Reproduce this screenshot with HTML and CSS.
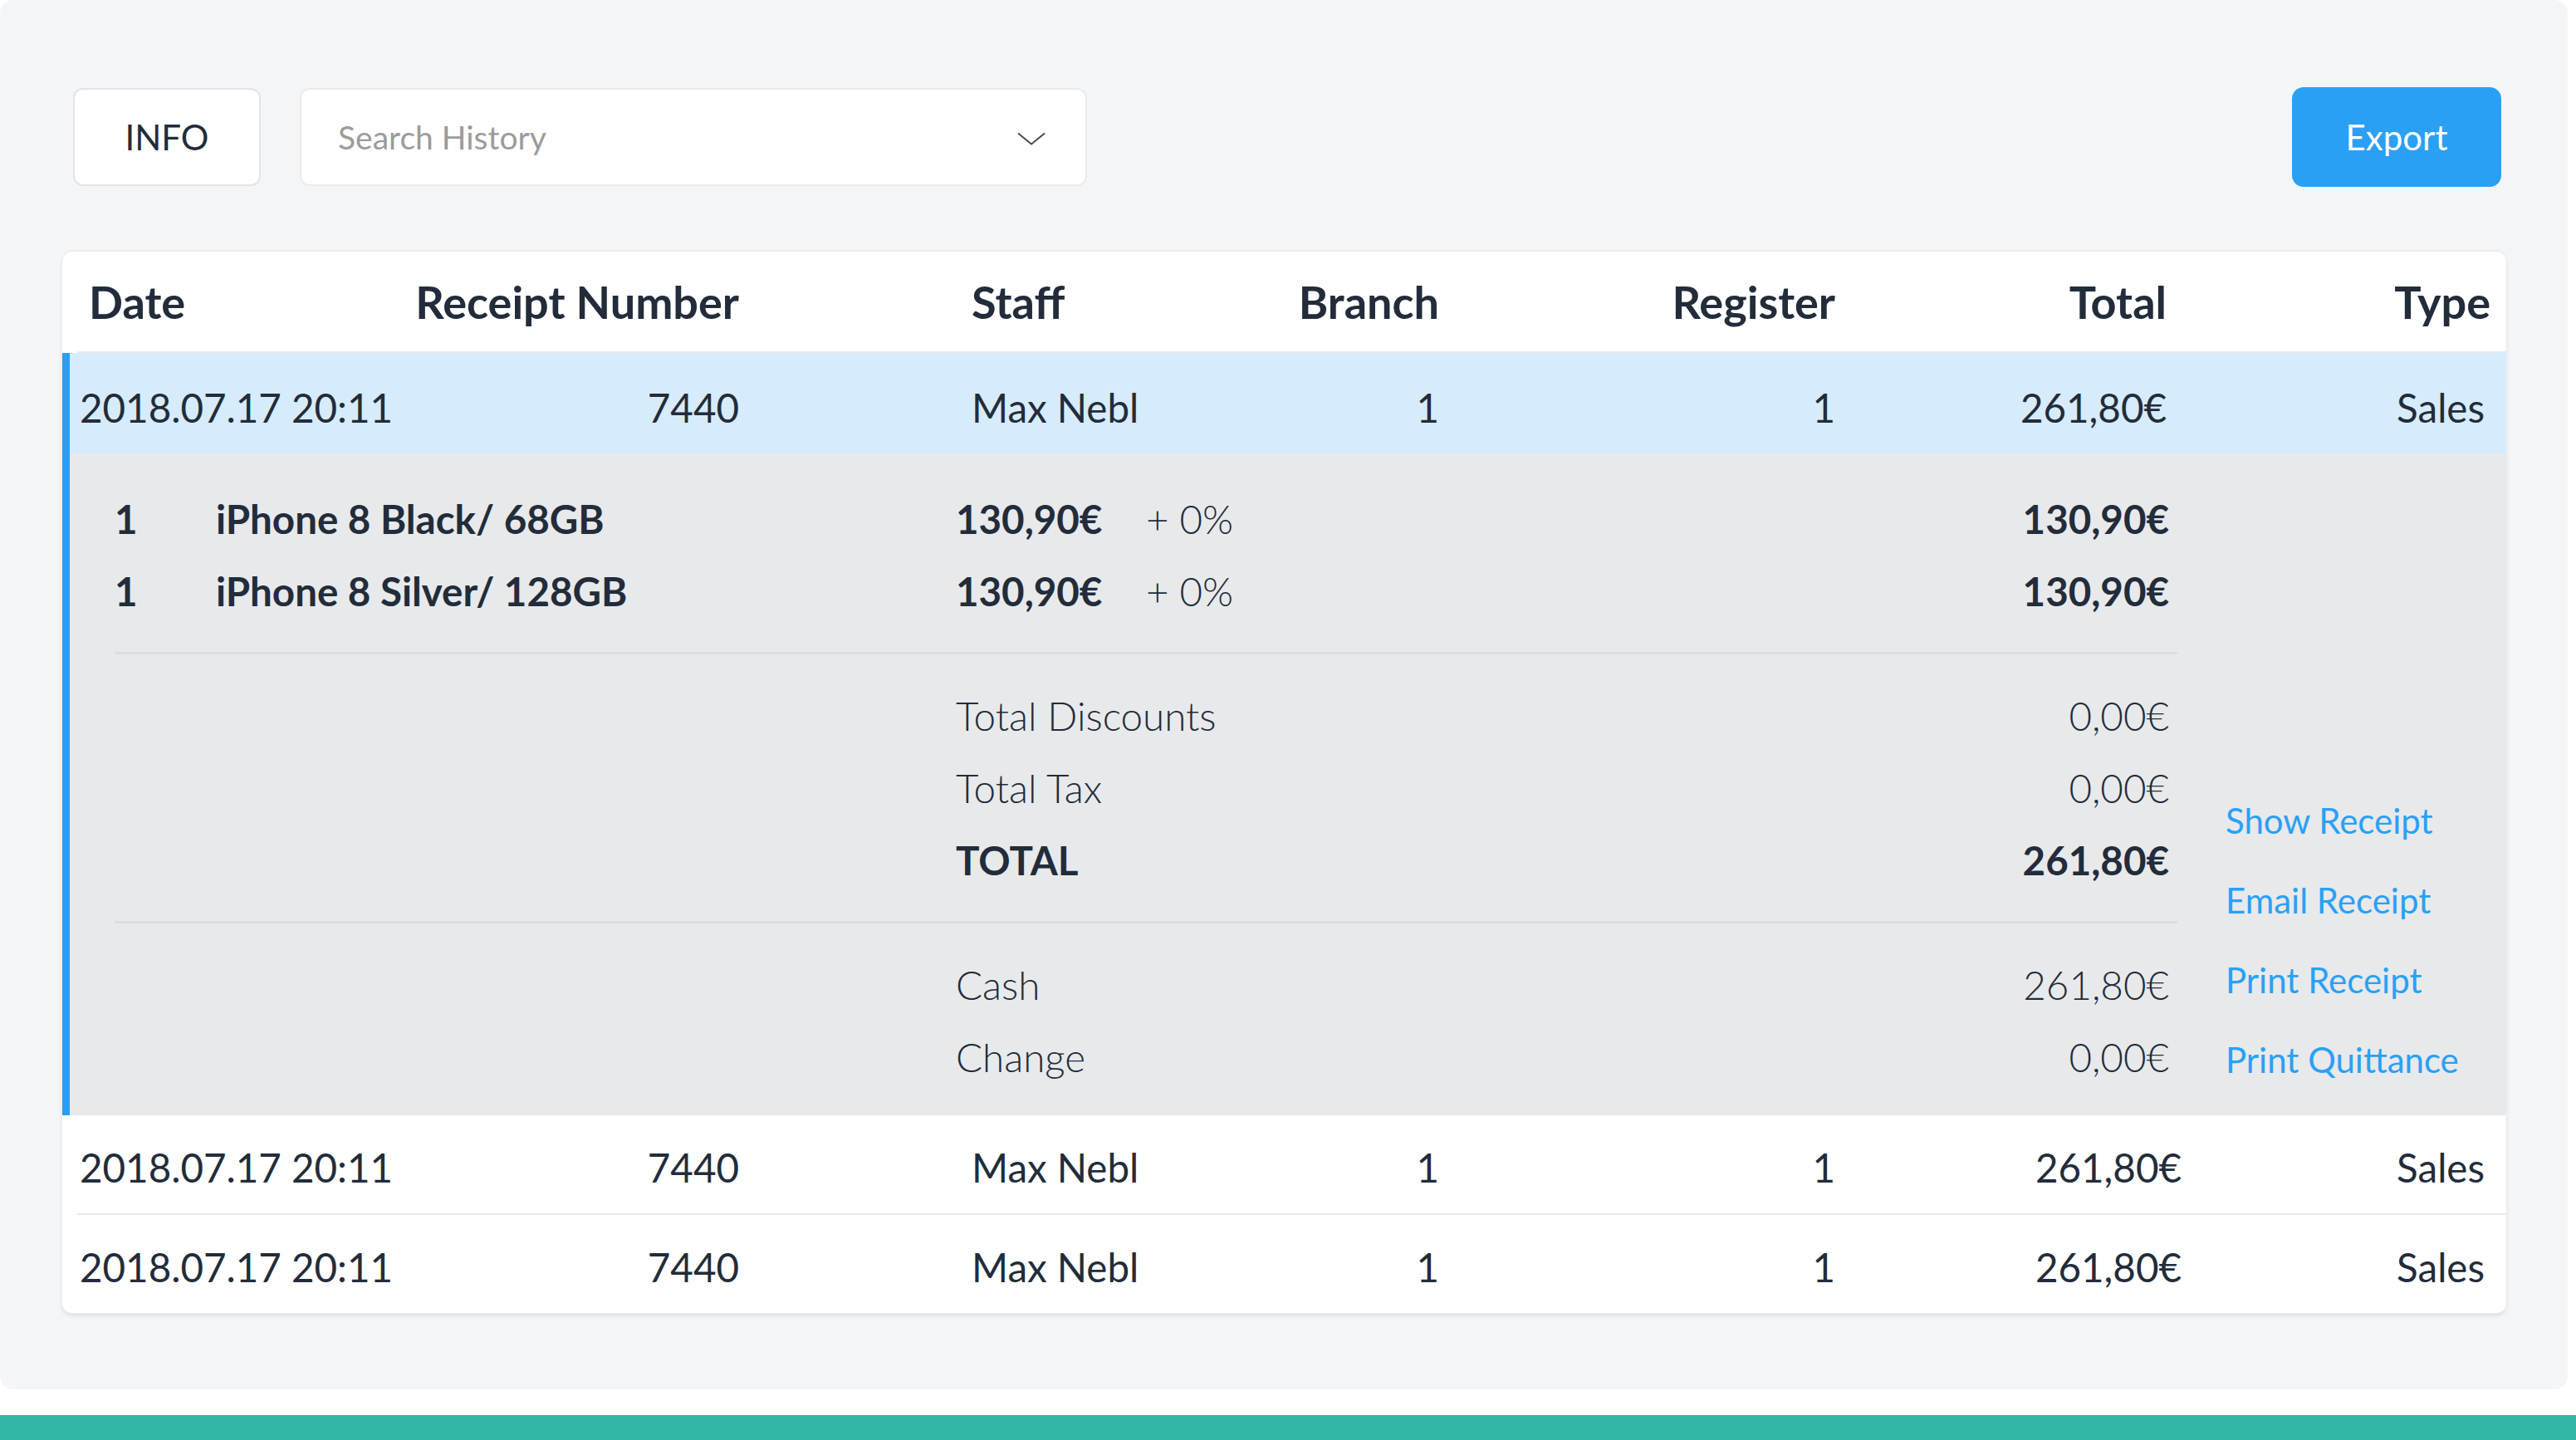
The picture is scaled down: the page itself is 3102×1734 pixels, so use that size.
FILE: index.html
```html
<!DOCTYPE html>
<html lang="en">
<head>
<meta charset="utf-8">
<title>Sales History</title>
<link rel="stylesheet" href="styles.css">
</head>
<body>
<div class="panel">
  <div class="toolbar">
    <button class="btn-info">INFO</button>
    <div class="search">
      <span class="search-text">Search History</span>
      <svg class="chev" width="34" height="16" viewBox="0 0 34 16"><path d="M1 1.5 L17 14.5 L33 1.5" fill="none" stroke="#4a4a4a" stroke-width="2"/></svg>
    </div>
    <button class="btn-export">Export</button>
  </div>

  <div class="card">
    <div class="row head">
      <div class="c date">Date</div>
      <div class="c num">Receipt Number</div>
      <div class="c staff">Staff</div>
      <div class="c r">Branch</div>
      <div class="c r">Register</div>
      <div class="c r">Total</div>
      <div class="c r">Type</div>
    </div>
    <div class="rule"></div>

    <div class="expanded">
      <div class="row body-row sel">
        <div class="c date">2018.07.17 20:11</div>
        <div class="c num">7440</div>
        <div class="c staff">Max Nebl</div>
        <div class="c r">1</div>
        <div class="c r">1</div>
        <div class="c r tot">261,80€</div>
        <div class="c r type">Sales</div>
      </div>
      <div class="detail">
        <div class="main">
          <div class="line item"><span class="qty">1</span><span class="name">iPhone 8 Black/ 68GB</span><span class="price">130,90€</span><span class="pct">+ 0%</span><span class="amt">130,90€</span></div>
          <div class="line item"><span class="qty">1</span><span class="name">iPhone 8 Silver/ 128GB</span><span class="price">130,90€</span><span class="pct">+ 0%</span><span class="amt">130,90€</span></div>
          <div class="divider"></div>
          <div class="line sum"><span>Total Discounts</span><span>0,00€</span></div>
          <div class="line sum"><span>Total Tax</span><span>0,00€</span></div>
          <div class="line sum strong"><span>TOTAL</span><span>261,80€</span></div>
          <div class="divider"></div>
          <div class="line sum"><span>Cash</span><span>261,80€</span></div>
          <div class="line sum"><span>Change</span><span>0,00€</span></div>
        </div>
        <div class="actions">
          <a href="#">Show Receipt</a>
          <a href="#">Email Receipt</a>
          <a href="#">Print Receipt</a>
          <a href="#">Print Quittance</a>
        </div>
      </div>
    </div>

    <div class="row body-row plain">
      <div class="c date">2018.07.17 20:11</div>
      <div class="c num">7440</div>
      <div class="c staff">Max Nebl</div>
      <div class="c r">1</div>
      <div class="c r">1</div>
      <div class="c r tot">261,80€</div>
      <div class="c r type">Sales</div>
    </div>
    <div class="rule"></div>
    <div class="row body-row plain">
      <div class="c date">2018.07.17 20:11</div>
      <div class="c num">7440</div>
      <div class="c staff">Max Nebl</div>
      <div class="c r">1</div>
      <div class="c r">1</div>
      <div class="c r tot">261,80€</div>
      <div class="c r type">Sales</div>
    </div>
  </div>
</div>
<div class="band"></div>
</body>
</html>
```

FILE: styles.css
```css
* { box-sizing: border-box; }
html, body { margin: 0; padding: 0; background: #ffffff; }
body {
  width: 3102px;
  font-family: Lato, "Noto Sans", "Liberation Sans", sans-serif;
  color: #222c3a;
  overflow: hidden;
}

.panel {
  width: 3092px;
  background: #f4f5f7;
  border-radius: 16px;
  padding: 105px 0 92px;
}

/* toolbar */
.toolbar {
  display: flex;
  align-items: center;
  height: 120px;
  padding: 0 80px 0 88px;
}
.btn-info {
  width: 226px;
  height: 118px;
  padding: 0;
  background: #ffffff;
  border: 2px solid #e1e4ea;
  border-radius: 12px;
  font: 400 42px Lato, sans-serif;
  color: #222c3a;
}
.search {
  margin-left: 47px;
  width: 948px;
  height: 118px;
  background: #ffffff;
  border: 2px solid #eaebed;
  border-radius: 12px;
  display: flex;
  align-items: center;
  justify-content: space-between;
  padding: 0 48px 0 44px;
}
.search-text { font-size: 39px; color: #9b9b9b; }
.chev { display: block; margin-top: 4px; }
.btn-export {
  margin-left: auto;
  width: 252px;
  height: 120px;
  border: 0;
  border-radius: 14px;
  background: #2aa0f5;
  color: #ffffff;
  font: 400 42px Lato, sans-serif;
  padding: 0;
}

/* table card */
.card {
  margin: 78px 74px 0 75px;
  background: #ffffff;
  border-radius: 12px;
  overflow: hidden;
  box-shadow: 0 0 0 1px #ebecee, 0 -2px 0 #ebecee, 0 3px 5px rgba(0, 0, 0, 0.10);
}
.row {
  display: grid;
  grid-template-columns: 525px 290px 610px 233px 477px 399px 390px;
  align-items: center;
  white-space: nowrap;
}
.c.num, .c.r { justify-self: end; text-align: right; }
.c.staff { padding-left: 280px; }

.head { height: 120px; font-size: 54px; font-weight: 700; }
.head .date { padding-left: 32px; }

.rule { height: 2px; margin-left: 18px; background: #e9eaec; }

.body-row { font-size: 47.5px; font-weight: 400; }
.body-row .type { padding-right: 7px; }

.plain { height: 118px; padding-top: 6px; }
.plain .date { padding-left: 21px; }
.plain .tot { margin-right: -18px; }

.expanded { border-left: 9px solid #2a9df4; }
.sel {
  height: 121px;
  padding-top: 9px;
  background: #d6ebfb;
  grid-template-columns: 516px 290px 610px 233px 477px 399px 390px;
}
.sel .date { padding-left: 12px; }

/* expanded detail */
.detail {
  background: #e8e9eb;
  display: grid;
  grid-template-columns: 2484px 1fr;
  column-gap: 58px;
  padding: 35px 0 27px 54px;
}
.line { height: 87px; line-height: 87px; font-size: 47.5px; white-space: nowrap; }
.item {
  display: grid;
  grid-template-columns: 122px 891px 229px 1fr auto;
  padding-right: 10px;
  font-weight: 700;
}
.item .pct { font-weight: 300; }
.sum {
  display: flex;
  justify-content: space-between;
  padding: 0 10px 0 1013px;
  font-weight: 300;
}
.sum.strong { font-weight: 700; }
.divider { height: 3px; background: #dddee1; margin: 30px 0 30px; }

.actions {
  align-self: end;
  margin-bottom: -8px;
  display: flex;
  flex-direction: column;
}
.actions a {
  font-size: 42px;
  line-height: 96px;
  color: #2aa0f5;
  text-decoration: none;
  white-space: nowrap;
}

.band { height: 30px; margin-top: 31px; background: #33b5a5; }
```
